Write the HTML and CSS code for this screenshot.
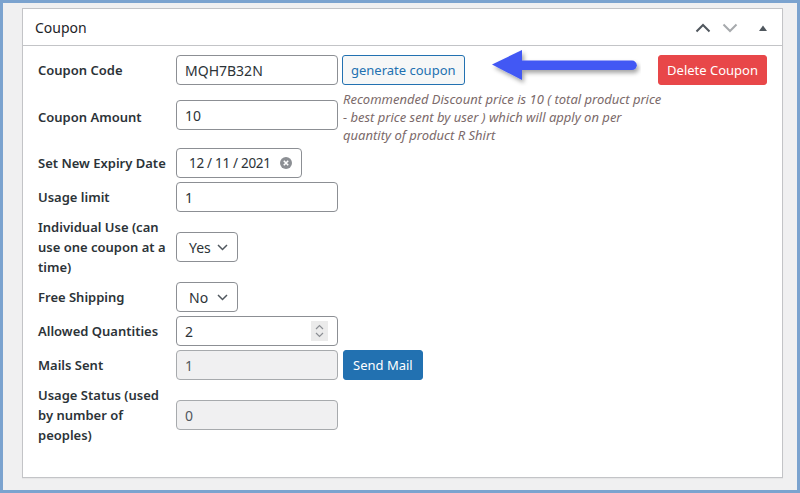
FILE: index.html
```html
<!DOCTYPE html>
<html lang="en">
<head>
    <meta charset="UTF-8">
    <meta name="viewport" content="width=device-width, initial-scale=1.0">
    <title>Coupon</title>
    <link rel="stylesheet" href="styles.css">
</head>
<body>
    <div class="page">
        <!-- Coupon meta box -->
        <div class="postbox">
            <div class="postbox-header">
                <h2>Coupon</h2>
                <div class="handle-actions">
                    <svg class="handle up" width="16" height="10" viewBox="0 0 16 10"><path d="M1.5 8.5 L8 2 L14.5 8.5" fill="none" stroke="#50575e" stroke-width="2"/></svg>
                    <svg class="handle down" width="16" height="10" viewBox="0 0 16 10"><path d="M1.5 1.5 L8 8 L14.5 1.5" fill="none" stroke="#a7aaad" stroke-width="2"/></svg>
                    <svg class="handle toggle" width="10" height="8" viewBox="0 0 10 8"><path d="M1 7 L5 1.5 L9 7 Z" fill="#50575e"/></svg>
                </div>
            </div>

            <div class="inside">
                <div class="field-row">
                    <label class="field-label">Coupon Code</label>
                    <input class="text-input" type="text" value="MQH7B32N">
                    <button class="button button-secondary">generate coupon</button>
                    <svg class="annotation-arrow" width="152" height="38" viewBox="0 0 152 38">
                        <defs>
                            <filter id="arrowShadow" x="-10%" y="-30%" width="120%" height="180%">
                                <feDropShadow dx="2" dy="3" stdDeviation="2" flood-color="#000" flood-opacity="0.35"/>
                            </filter>
                        </defs>
                        <g filter="url(#arrowShadow)">
                            <path d="M33 12.5 H143 a4.8 4.8 0 0 1 0 9.6 H33 Z" fill="#4259f4"/>
                            <path d="M3 16.5 L33 2 L33 32 Z" fill="#4259f4"/>
                        </g>
                    </svg>
                    <button class="button button-delete">Delete Coupon</button>
                </div>

                <div class="field-row row-tall">
                    <label class="field-label">Coupon Amount</label>
                    <input class="text-input amount-input" type="text" value="10">
                    <p class="description">Recommended Discount price is 10 ( total product price - best price sent by user ) which will apply on per quantity of product R Shirt</p>
                </div>

                <div class="field-row">
                    <label class="field-label">Set New Expiry Date</label>
                    <div class="date-input">
                        <span>12 / 11 / 2021</span>
                        <svg class="clear-icon" width="12" height="12" viewBox="0 0 12 12"><circle cx="6" cy="6" r="6" fill="#8c8f94"/><path d="M3.8 3.8 L8.2 8.2 M8.2 3.8 L3.8 8.2" stroke="#fff" stroke-width="1.6"/></svg>
                    </div>
                </div>

                <div class="field-row">
                    <label class="field-label">Usage limit</label>
                    <input class="text-input" type="text" value="1">
                </div>

                <div class="field-row">
                    <label class="field-label">Individual Use (can use one coupon at a time)</label>
                    <div class="select-box">
                        <span>Yes</span>
                        <svg width="11" height="7" viewBox="0 0 11 7"><path d="M1 1 L5.5 5.5 L10 1" fill="none" stroke="#50575e" stroke-width="1.5"/></svg>
                    </div>
                </div>

                <div class="field-row">
                    <label class="field-label">Free Shipping</label>
                    <div class="select-box">
                        <span>No</span>
                        <svg width="11" height="7" viewBox="0 0 11 7"><path d="M1 1 L5.5 5.5 L10 1" fill="none" stroke="#50575e" stroke-width="1.5"/></svg>
                    </div>
                </div>

                <div class="field-row">
                    <label class="field-label">Allowed Quantities</label>
                    <div class="number-input">
                        <span>2</span>
                        <span class="spinner">
                            <svg width="9" height="14" viewBox="0 0 9 14"><path d="M1 5 L4.5 1.5 L8 5 M1 9 L4.5 12.5 L8 9" fill="none" stroke="#8c8f94" stroke-width="1.2"/></svg>
                        </span>
                    </div>
                </div>

                <div class="field-row">
                    <label class="field-label">Mails Sent</label>
                    <input class="text-input" type="text" value="1" disabled>
                    <button class="button button-primary">Send Mail</button>
                </div>

                <div class="field-row">
                    <label class="field-label">Usage Status (used by number of peoples)</label>
                    <input class="text-input" type="text" value="0" disabled>
                </div>
            </div>
        </div>
    </div>
</body>
</html>
```

FILE: styles.css
```css
/* General body styling */
body {
    margin: 0;
    padding: 0;
    font-family: "Noto Sans", "Open Sans", sans-serif;
    color: #2c3338;
}

/* Screenshot frame */
.page {
    box-sizing: border-box;
    height: 493px;
    border: 3px solid #7ba3cf;
    background-color: #f0f0f1;
    padding: 5px 14px 12px 19px;
    display: flex;
    flex-direction: column;
}

/* Meta box */
.postbox {
    flex: 1;
    background-color: #fff;
    border: 1px solid #c3c4c7;
    box-shadow: 0 1px 1px rgba(0, 0, 0, 0.04);
}

.postbox-header {
    display: flex;
    align-items: center;
    justify-content: space-between;
    height: 36px;
    border-bottom: 1px solid #c3c4c7;
    padding: 0 14px 0 12px;
}

.postbox-header h2 {
    margin: 0;
    font-size: 14px;
    font-weight: normal;
    color: #1d2327;
}

.handle-actions {
    display: flex;
    align-items: center;
    gap: 11px;
    padding-top: 2px;
}

.handle.toggle {
    margin-left: 9px;
}

/* Form rows */
.inside {
    display: flex;
    flex-direction: column;
    gap: 4px;
    padding: 9px 14px 0 15px;
}

.field-row {
    display: flex;
    align-items: center;
    min-height: 30px;
}

.row-tall {
    min-height: 55px;
}

.field-label {
    box-sizing: border-box;
    width: 138px;
    flex-shrink: 0;
    padding: 1px 8px 1px 0;
    font-size: 13px;
    font-weight: 600;
    line-height: 20px;
    color: #2c3338;
}

.text-input,
.date-input,
.select-box,
.number-input {
    box-sizing: border-box;
    height: 30px;
    border: 1px solid #8c8f94;
    border-radius: 4px;
    background-color: #fff;
    font-family: inherit;
    font-size: 14px;
    color: #2c3338;
}

.text-input {
    width: 162px;
    padding: 0 8px;
}

.text-input:disabled {
    background-color: #f0f0f1;
    border-color: #a7aaad;
    color: #50575e;
}

.amount-input {
    margin-top: -3px;
}

.date-input {
    display: flex;
    align-items: center;
    width: 126px;
    padding: 0 9px 0 12px;
    font-size: 13.5px;
    letter-spacing: -0.3px;
    white-space: nowrap;
}

.clear-icon {
    margin-left: auto;
}

.select-box {
    display: flex;
    align-items: center;
    justify-content: space-between;
    width: 62px;
    padding: 0 9px 0 12px;
}

.number-input {
    display: flex;
    align-items: center;
    justify-content: space-between;
    width: 162px;
    padding: 0 9px 0 8px;
}

.spinner {
    display: flex;
    align-items: center;
    justify-content: center;
    width: 17px;
    height: 20px;
    background-color: #ebebeb;
}

/* Buttons */
.button {
    box-sizing: border-box;
    height: 30px;
    border-radius: 3px;
    font-family: inherit;
    font-size: 13px;
    padding: 0 8px;
    cursor: pointer;
}

.button-secondary {
    margin-left: 4px;
    border: 1px solid #2271b1;
    background-color: #f6f7f7;
    color: #2271b1;
}

.button-primary {
    margin-left: 5px;
    padding: 0 9px;
    border: 1px solid #2271b1;
    background-color: #2271b1;
    color: #fff;
}

.button-delete {
    margin-left: auto;
    margin-right: 1px;
    border: 1px solid #e84749;
    background-color: #e84749;
    color: #fff;
}

.annotation-arrow {
    margin: -9px 0 -3px 24px;
}

.description {
    width: 320px;
    margin: 0 0 0 5px;
    font-size: 13px;
    font-style: italic;
    line-height: 18px;
    color: #7b6a6a;
}
```
